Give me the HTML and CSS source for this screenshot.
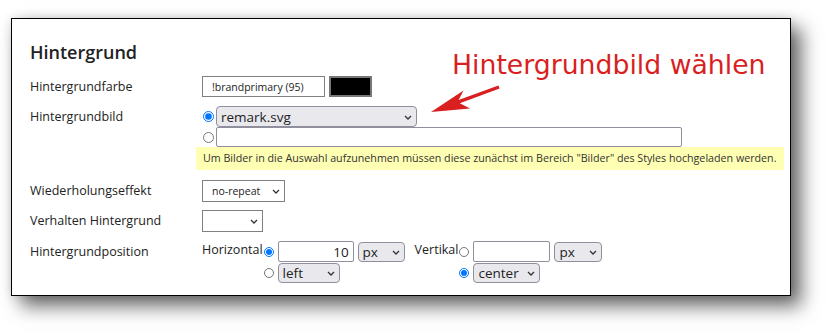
FILE: index.html
```html
<!DOCTYPE html>
<html>
<head>
    <title>Hintergrund</title>
    <link rel="stylesheet" href="styles.css">
</head>
<body>
    <div class="panel">
        <h2 class="panel-title">Hintergrund</h2>

        <div class="row row-color">
            <label class="lbl" for="bgColor">Hintergrundfarbe</label>
            <div class="ctl">
                <input type="text" id="bgColor" class="box color-name" value="!brandprimary (95)">
                <span class="swatch"></span>
            </div>
        </div>

        <div class="row row-image">
            <label class="lbl">Hintergrundbild</label>
            <div class="ctl ctl-stack">
                <div class="line">
                    <input type="radio" name="bgImage" class="radio" checked>
                    <span class="sel">
                        <select class="gray-sel image-sel"><option>remark.svg</option></select>
                        <svg class="chev" width="8" height="5" viewBox="0 0 8 5"><path d="M1 1l3 3 3-3" fill="none" stroke="#333" stroke-width="1.3"/></svg>
                    </span>
                </div>
                <div class="line">
                    <input type="radio" name="bgImage" class="radio">
                    <input type="text" class="field url-field">
                </div>
                <div class="note">Um Bilder in die Auswahl aufzunehmen müssen diese zunächst im Bereich "Bilder" des Styles hochgeladen werden.</div>
            </div>
        </div>

        <div class="row row-repeat">
            <label class="lbl">Wiederholungseffekt</label>
            <div class="ctl">
                <span class="sel">
                    <select class="box box-sel repeat-sel"><option>no-repeat</option></select>
                    <svg class="chev" width="8" height="5" viewBox="0 0 8 5"><path d="M1 1l3 3 3-3" fill="none" stroke="#333" stroke-width="1.3"/></svg>
                </span>
            </div>
        </div>

        <div class="row row-attach">
            <label class="lbl">Verhalten Hintergrund</label>
            <div class="ctl">
                <span class="sel">
                    <select class="box box-sel attach-sel"><option></option></select>
                    <svg class="chev" width="8" height="5" viewBox="0 0 8 5"><path d="M1 1l3 3 3-3" fill="none" stroke="#333" stroke-width="1.3"/></svg>
                </span>
            </div>
        </div>

        <div class="row row-pos">
            <label class="lbl">Hintergrundposition</label>
            <div class="ctl">
                <div class="pos-group">
                    <span class="pos-label">Horizontal</span>
                    <div class="pos-grid">
                        <input type="radio" name="posX" class="radio" checked>
                        <input type="text" class="field num-field" value="10">
                        <span class="sel">
                            <select class="gray-sel unit-sel"><option>px</option></select>
                            <svg class="chev" width="8" height="5" viewBox="0 0 8 5"><path d="M1 1l3 3 3-3" fill="none" stroke="#333" stroke-width="1.3"/></svg>
                        </span>
                        <input type="radio" name="posX" class="radio">
                        <span class="sel span2">
                            <select class="gray-sel word-sel left-sel"><option>left</option></select>
                            <svg class="chev" width="8" height="5" viewBox="0 0 8 5"><path d="M1 1l3 3 3-3" fill="none" stroke="#333" stroke-width="1.3"/></svg>
                        </span>
                    </div>
                </div>
                <div class="pos-group pos-vertical">
                    <span class="pos-label">Vertikal</span>
                    <div class="pos-grid">
                        <input type="radio" name="posY" class="radio">
                        <input type="text" class="field num-field num-y" value="">
                        <span class="sel">
                            <select class="gray-sel unit-sel unit-y"><option>px</option></select>
                            <svg class="chev" width="8" height="5" viewBox="0 0 8 5"><path d="M1 1l3 3 3-3" fill="none" stroke="#333" stroke-width="1.3"/></svg>
                        </span>
                        <input type="radio" name="posY" class="radio" checked>
                        <span class="sel span2">
                            <select class="gray-sel word-sel center-sel"><option>center</option></select>
                            <svg class="chev" width="8" height="5" viewBox="0 0 8 5"><path d="M1 1l3 3 3-3" fill="none" stroke="#333" stroke-width="1.3"/></svg>
                        </span>
                    </div>
                </div>
            </div>
        </div>

        <!-- annotation drawn over the screenshot -->
        <div class="callout">Hintergrundbild wählen</div>
        <svg class="callout-arrow" width="80" height="36" viewBox="0 0 80 36">
            <polygon points="6,30 38.5,8.5 33.6,18 73.4,3.4 74.6,6.6 34.8,21.3 45,26.5" fill="#d91f1f"/>
        </svg>
    </div>
</body>
</html>
```

FILE: styles.css
```css
body {
    margin: 0;
    background-color: #fff;
    font-family: "Open Sans", "Liberation Sans", sans-serif;
    color: #222;
}

.panel {
    position: relative;
    box-sizing: border-box;
    width: 780px;
    height: 278px;
    margin: 18px 0 38px 11px;
    padding: 21px 6px 0 18px;
    background-color: #fff;
    border: 1px solid #000;
    box-shadow: 0 0 10px rgba(0, 0, 0, 0.12), 10px 10px 18px rgba(0, 0, 0, 0.6);
}

.panel-title {
    margin: 0;
    font-size: 18px;
    font-weight: 600;
    line-height: 24px;
}

.row {
    display: flex;
    align-items: flex-start;
}

.row-color { margin-top: 12px; }
.row-image { margin-top: 8px; }
.row-repeat { margin-top: 10px; }
.row-attach { margin-top: 8px; }
.row-pos { margin-top: 9px; }

.lbl {
    flex: none;
    width: 172px;
    font-size: 12.5px;
    line-height: 22px;
}

.ctl {
    flex: 1;
    display: flex;
    align-items: flex-start;
}

.ctl-stack {
    flex-direction: column;
}

.line {
    display: flex;
    align-items: center;
}

/* form controls */
.radio {
    width: 11px;
    height: 11px;
    margin: 0 2px 0 1px;
}

.box {
    box-sizing: border-box;
    height: 22px;
    border: 1px solid #808080;
    border-radius: 0;
    background-color: #fff;
    font-family: "Open Sans", sans-serif;
    font-size: 10.5px;
    line-height: normal;
    color: #222;
    outline: none;
}

.color-name {
    width: 123px;
    height: 21px;
    padding: 0 0 0 9px;
}

.swatch {
    box-sizing: border-box;
    width: 43px;
    height: 21px;
    margin-left: 4px;
    background-color: #000;
    border: 2px solid #777;
}

.sel {
    position: relative;
    display: inline-flex;
}

.chev {
    position: absolute;
    right: 5px;
    top: 50%;
    margin-top: -2px;
    pointer-events: none;
}

.box-sel {
    appearance: none;
    padding: 0 0 0 9px;
}

.repeat-sel { width: 83px; }
.attach-sel { width: 61px; }

.gray-sel {
    appearance: none;
    box-sizing: border-box;
    border: 1px solid #8f8f9d;
    border-radius: 4px;
    background-color: #e9e9ed;
    font-family: "Open Sans", sans-serif;
    font-size: 13.5px;
    line-height: normal;
    color: #222;
    padding: 0 0 0 4px;
    outline: none;
}

.image-sel {
    width: 201px;
    height: 21px;
}

.field {
    box-sizing: border-box;
    height: 20px;
    border: 1px solid #8f8f9d;
    border-radius: 2px;
    background-color: #fff;
    font-family: "Open Sans", sans-serif;
    font-size: 13.5px;
    color: #222;
    outline: none;
}

.url-field {
    width: 466px;
}

.note {
    align-self: stretch;
    margin-left: -6px;
    height: 23px;
    padding-left: 7px;
    background-color: #ffffb3;
    font-size: 10.7px;
    line-height: 23px;
    color: #333;
    white-space: nowrap;
    overflow: hidden;
}

/* background position */
.pos-group {
    display: flex;
    align-items: flex-start;
}

.pos-vertical {
    margin-left: 10px;
}

.pos-label {
    font-size: 12.5px;
    line-height: 18px;
}

.pos-grid {
    display: grid;
    grid-template-columns: auto auto auto;
    align-items: center;
    column-gap: 4px;
    row-gap: 1px;
}

.pos-grid .radio {
    width: 10px;
    height: 10px;
    margin: 0 0 0 1px;
}

.span2 {
    grid-column: 2 / 4;
    justify-self: start;
}

.num-field {
    width: 76px;
    height: 21px;
    padding: 0 4px 0 0;
    text-align: right;
}

.num-y { width: 77px; }

.unit-sel {
    width: 47px;
    height: 20px;
}

.unit-y { width: 48px; }

.word-sel { height: 20px; }
.left-sel { width: 62px; }
.center-sel { width: 67px; }

/* annotation */
.callout {
    position: absolute;
    left: 440px;
    top: 32px;
    font-family: "DejaVu Sans", sans-serif;
    font-size: 26.7px;
    line-height: 27px;
    color: #d91f1f;
    white-space: nowrap;
}

.callout-arrow {
    position: absolute;
    left: 413px;
    top: 63px;
}
```
